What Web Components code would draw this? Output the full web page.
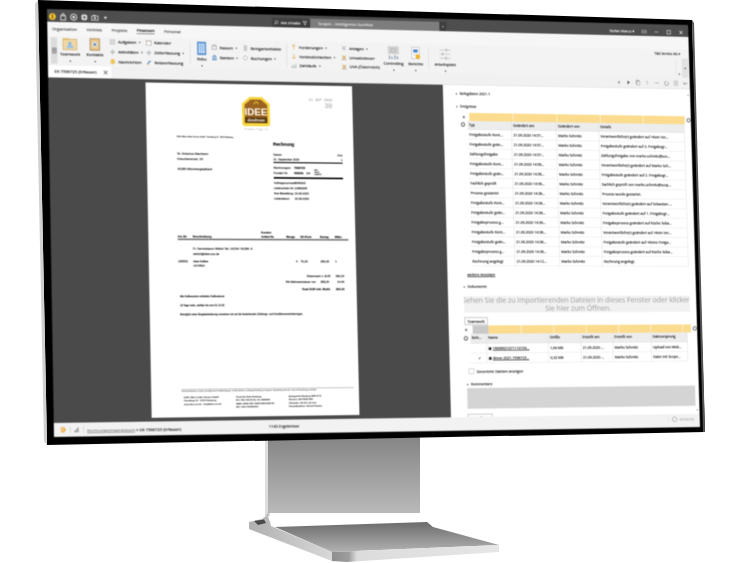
<!DOCTYPE html>
<html lang="de"><head><meta charset="utf-8"><title>Monitor</title>
<style>html,body{margin:0;background:#fff;width:740px;height:563px;overflow:hidden;font-family:"Open Sans","Noto Sans",sans-serif}</style>
</head><body>
<monitor-view></monitor-view>
<script>
const ICONS={
teamwork:'<svg viewBox="0 0 28 24"><rect x="1" y="3" width="26" height="20" fill="#f0d7a4" stroke="#c69a50"/><rect x="1" y="1" width="11" height="4" fill="#dfc07a"/><circle cx="14" cy="11" r="3.2" fill="#8fb8e0"/><path d="M7 20c1-5 4-6 7-6s6 1 7 6z" fill="#9cc2e6"/></svg>',
kontakte:'<svg viewBox="0 0 20 24"><rect x="1" y="1" width="18" height="22" fill="#e6c48c" stroke="#8d6a2e"/><rect x="5" y="7" width="10" height="10" fill="#f5ecd8"/><path d="M7 9l6 6M13 9l-6 6" stroke="#3d6ea8" stroke-width="1.6"/></svg>',
rebu:'<svg viewBox="0 0 18 26"><rect x="1" y="1" width="16" height="24" fill="#5f9bdc" stroke="#3a75ba"/><rect x="3" y="4" width="12" height="18" fill="#d6e6f7"/><path d="M3 8h12M3 12h12M3 16h12M7 4v18M11 4v18" stroke="#6ba3e0" stroke-width="1"/></svg>',
ctrl:'<svg viewBox="0 0 24 26"><rect x="2" y="1" width="20" height="13" fill="#e4e4e4" stroke="#aaa"/><rect x="6" y="4" width="12" height="7" fill="#cfcfcf" stroke="#999"/><path d="M4 18v7M9 20v5M15 17v8M20 19v6" stroke="#8d9db2" stroke-width="2.4"/></svg>',
bericht:'<svg viewBox="0 0 20 26"><rect x="2" y="1" width="15" height="22" fill="#fff" stroke="#aaa"/><rect x="5" y="5" width="9" height="6" fill="#4c86c6"/><path d="M5 14h8M5 17h6" stroke="#bbb"/><circle cx="14" cy="19" r="4.5" fill="#f0b429"/></svg>',
arbeit:'<svg viewBox="0 0 26 26"><path d="M2 5h22M2 13h22M2 21h22" stroke="#c4c4c4" stroke-width="1.6"/><path d="M16 2v6M8 10v6M15 18v6" stroke="#a2a2a2" stroke-width="1.6"/></svg>',
box:'<svg viewBox="0 0 12 12"><rect x="1" y="1" width="10" height="10" fill="#d8d8d8" stroke="#c2c2c2"/></svg>',
cal:'<svg viewBox="0 0 12 12"><rect x="1" y="1.5" width="10" height="9.5" fill="#fff" stroke="#888"/><path d="M1 3.5h10" stroke="#e0a070"/></svg>',
plus:'<svg viewBox="0 0 12 12"><path d="M6 1v10M1 6h10" stroke="#6b9bd0" stroke-width="1.6"/><circle cx="6" cy="6" r="1.8" fill="#f0c060"/></svg>',
bell:'<svg viewBox="0 0 12 12"><path d="M6 1c2.6 0 3.5 2 3.5 4.5L11 9H1l1.5-3.5C2.5 3 3.4 1 6 1z" fill="#f3c74f" stroke="#d99f1f" stroke-width=".6"/><circle cx="6" cy="10.4" r="1.2" fill="#d99f1f"/></svg>',
pen:'<svg viewBox="0 0 12 12"><path d="M2 10l1-3 5-5 2 2-5 5z" fill="#5f8fc4"/><path d="M1 11h6" stroke="#d9a441"/></svg>',
coin:'<svg viewBox="0 0 12 12"><rect x="1" y="3" width="10" height="7" fill="#ececec" stroke="#999"/><path d="M3 3V1h6v2" stroke="#999" fill="none"/></svg>',
bank:'<svg viewBox="0 0 12 12"><path d="M1 4l5-3 5 3zM2 5h1.6v5H2zM5.2 5h1.6v5H5.2zM8.400 5H10v5H8.400zM1 10.300h10V12H1z" fill="#4d83c0"/></svg>',
sheet:'<svg viewBox="0 0 12 12"><rect x="3" y="0" width="7" height="12" fill="#c8c8c8"/></svg>',
diamond:'<svg viewBox="0 0 12 12"><path d="M6 1l5 5-5 5-5-5z" fill="#fff" stroke="#999"/></svg>',
up:'<svg viewBox="0 0 12 12"><path d="M6 1v10M3 4l3-3 3 3" stroke="#e2a84b" stroke-width="1.4" fill="none"/></svg>',
down:'<svg viewBox="0 0 12 12"><path d="M6 1v7" stroke="#e2a84b" stroke-width="1.4"/><path d="M2 8h8l-1 3H3z" fill="#e9c47d"/></svg>',
pay:'<svg viewBox="0 0 12 12"><path d="M1 11V7M4 11V4M7 11V6M10 11V2" stroke="#9db7a5" stroke-width="1.6"/></svg>',
xx:'<svg viewBox="0 0 12 12"><path d="M2 2l8 8M10 2l-8 8" stroke="#9a9a9a" stroke-width="1.4"/></svg>',
tax:'<svg viewBox="0 0 12 12"><path d="M2 2l8 8M10 2l-8 8" stroke="#c9973c" stroke-width="1.6"/><path d="M1 11h10" stroke="#8d8d8d"/></svg>'
};
function def(name,html,extra){customElements.define(name,class extends HTMLElement{
  constructor(){super();this.attachShadow({mode:'open'});}
  connectedCallback(){this.shadowRoot.innerHTML=typeof html==='function'?html(this):html; if(extra)extra(this);}
});}

def('rib-item',h=>`<style>:host{display:flex;align-items:center;gap:5px;height:19px;font-size:7.800px;color:#000;white-space:nowrap}
svg{width:11px;height:11px;flex:none}b{font-weight:400;font-size:5px;color:#222}</style>${ICONS[h.getAttribute('i')]||''}<span><slot></slot></span>${h.hasAttribute('a')?'<b>▾</b>':''}`);
def('rib-big',h=>`<style>:host{display:flex;flex-direction:column;align-items:center;width:${h.getAttribute('w')}px;margin-left:${h.getAttribute('m')||0}px;height:56px;font-size:7.800px;color:#000;white-space:nowrap}
svg{width:${h.getAttribute('iw')||28}px;height:${h.getAttribute('ih')||24}px;margin-top:${h.getAttribute('t')||3}px;flex:none}span{margin-top:2px;line-height:10px}b{font-weight:400;font-size:5px;line-height:7px;margin-top:5px}</style>${ICONS[h.getAttribute('i')]}<span><slot></slot></span><b>▾</b>`);
def('rib-col',h=>`<style>:host{display:flex;flex-direction:column;width:${h.getAttribute('w')}px;margin-left:${h.getAttribute('m')||0}px;padding-top:${h.getAttribute('t')||0}px;box-sizing:border-box}</style><slot></slot>`);
def('rib-sep',h=>`<style>:host{display:block;width:1px;height:44px;background:#d6d6d6;align-self:center;margin-left:${h.getAttribute('m')||0}px}</style>`);

def('title-bar',`<style>:host{display:flex;align-items:center;height:24px;background:#4e4e4e;color:#fff;font-size:7.500px;box-sizing:border-box;white-space:nowrap}
.ic{display:flex;align-items:center;gap:6px;margin:4px 0 0 3px;width:428px;flex:none}
.ic svg{width:14px;height:14px;flex:none}
.search{display:flex;align-items:stretch;width:347px;height:18px;margin-top:5px;background:#7d7d7d;color:#eee;font-size:7.500px;flex:none}
.sl{display:flex;align-items:center;gap:4px;background:#3f3f3f;color:#fff;padding:0 6px 0 4px;width:75px;box-sizing:border-box;flex:none}
.sl svg{width:10px;height:10px}.st{flex:1;padding-left:16px;align-self:center}
.se{width:14px;background:#3e3e3e;display:flex;align-items:center;justify-content:center;font-size:5px}
.usr{margin:6px 0 0 auto;display:flex;align-items:center;gap:15px;padding-right:10px}.usr svg{width:11px;height:11px}</style>
<div class="ic">
<svg viewBox="0 0 14 14"><circle cx="7" cy="7" r="6.500" fill="#f2c230"/><rect x="6" y="3" width="2" height="8" fill="#5a4a10"/></svg>
<svg viewBox="0 0 14 14"><path d="M2.500 5h9v8h-9zM5 5V3a2 2 0 014 0v2" fill="none" stroke="#eee" stroke-width="1.500"/></svg>
<svg viewBox="0 0 14 14"><circle cx="7" cy="7" r="5.800" fill="none" stroke="#eee" stroke-width="1.500"/><circle cx="7" cy="7" r="2.500" fill="#eee"/></svg>
<svg viewBox="0 0 14 14"><circle cx="7" cy="7" r="6" fill="#eee"/><circle cx="7" cy="7" r="2.200" fill="#4e4e4e"/><path d="M7 1v3M7 10v3M1 7h3M10 7h3" stroke="#4e4e4e"/></svg>
<svg viewBox="0 0 14 14"><rect x="1" y="4" width="12" height="8" fill="none" stroke="#eee" stroke-width="1.300"/><circle cx="7" cy="8" r="2" fill="#eee"/><rect x="4" y="2" width="4" height="2" fill="#eee"/></svg>
<svg viewBox="0 0 14 14"><path d="M4 5h6l-3 5z" fill="#eee"/></svg>
</div>
<div class="search"><div class="sl"><svg viewBox="0 0 10 10"><circle cx="5.500" cy="4" r="3" fill="none" stroke="#ddd"/><path d="M3.500 6.500L1 9" stroke="#ddd" stroke-width="1.300"/></svg><span>Alle Inhalte</span><svg viewBox="0 0 10 10"><path d="M1 1h8L6 5v4L4 8V5z" fill="none" stroke="#eee"/></svg></div><div class="st">Scopen – Intelligentes Suchfeld</div><div class="se">▾</div></div>
<div class="usr"><span>Stefan Marus ▾</span>
<svg viewBox="0 0 12 12"><rect x="1" y="3" width="10" height="6" fill="none" stroke="#bbb"/><path d="M1 6h10" stroke="#bbb"/></svg>
<svg viewBox="0 0 12 12"><path d="M2 6h8" stroke="#ddd" stroke-width="1.200"/></svg>
<svg viewBox="0 0 12 12"><rect x="2" y="2" width="8" height="8" fill="none" stroke="#ddd" stroke-width="1.400"/></svg>
<svg viewBox="0 0 12 12"><path d="M2.500 2.500l7 7M9.500 2.500l-7 7" stroke="#eee" stroke-width="1.300"/></svg></div>`);

def('tab-row',`<style>:host{display:flex;align-items:center;height:26px;background:#f6f6f6;font-size:7.800px;color:#333;white-space:nowrap;padding-left:9px;gap:18px;box-sizing:border-box}
.on{color:#000;font-weight:600;border-bottom:1.500px solid #444;padding-bottom:1px}</style>
<span>Organisation</span><span>Vertrieb</span><span>Projekte</span><span class="on">Finanzen</span><span>Personal</span>`);

def('ribbon-bar',`<style>:host{display:flex;height:56px;background:#f3f3f3;box-sizing:border-box;position:relative}
.strip{width:12px;height:50px;margin:3px 0 0 6px;background:#dcdcdc;display:flex;align-items:center;justify-content:center;flex:none}
.strip svg{width:9px;height:12px}
.end{margin-left:auto;width:130px;height:56px;display:flex;justify-content:flex-end;position:relative;flex:none}
.tns{font-size:7px;color:#000;margin:4px 18px 0 0;white-space:nowrap}
.sc{position:absolute;right:2px;top:18px;width:14px;height:38px;background:#e2e2e2;font-size:7px;color:#666;text-align:center;line-height:38px}
.dn{position:absolute;right:20px;bottom:3px;font-size:6px;color:#444}.vl{position:absolute;right:28px;top:20px;height:32px;width:1px;background:#dcdcdc}</style>
<div class="strip"><svg viewBox="0 0 9 12"><rect x="1" y="1" width="7" height="10" fill="#bbb" stroke="#777"/><path d="M1 4h7M1 7h7" stroke="#777"/></svg></div>
<rib-big i="teamwork" w="42" m="3">Teamwork</rib-big>
<rib-big i="kontakte" w="32" m="10" iw="20" ih="24">Kontakte</rib-big>
<rib-col w="69" m="12"><rib-item i="box" a>Aufgaben</rib-item><rib-item i="plus" a>Aktivitäten</rib-item><rib-item i="bell">Nachrichten</rib-item></rib-col>
<rib-col w="84"><rib-item i="cal">Kalender</rib-item><rib-item i="plus" a>Zeiterfassung</rib-item><rib-item i="pen">Reiseerfassung</rib-item></rib-col>
<rib-sep></rib-sep>
<rib-big i="rebu" w="24" m="10" iw="18" ih="26" t="5">Rebu</rib-big>
<rib-col w="60" m="7" t="6"><rib-item i="coin" a>Kassen</rib-item><rib-item i="bank" a>Banken</rib-item></rib-col>
<rib-col w="85" t="6"><rib-item i="sheet">Belegarbeitsliste</rib-item><rib-item i="diamond" a>Buchungen</rib-item></rib-col>
<rib-sep m="1"></rib-sep>
<rib-col w="99" m="8" t="3"><rib-item i="up" a>Forderungen</rib-item><rib-item i="down" a>Verbindlichkeiten</rib-item><rib-item i="pay" a>Zahlläufe</rib-item></rib-col>
<rib-col w="82" t="3"><rib-item i="xx" a>Anlagen</rib-item><rib-item i="tax">Umsatzsteuer</rib-item><rib-item i="tax">UVA (Österreich)</rib-item></rib-col>
<rib-big i="ctrl" w="44" iw="24" ih="26" t="6">Controlling</rib-big>
<rib-big i="bericht" w="31" m="7" iw="20" ih="26" t="6">Berichte</rib-big>
<rib-sep m="10"></rib-sep>
<rib-big i="arbeit" w="48" m="9" iw="26" ih="26" t="6">Arbeitsplatz</rib-big>
<div class="end"><span class="tns">T&amp;S Service AG ▾</span><div class="vl"></div><div class="sc">◂</div><div class="dn">▾</div></div>`);

def('doc-tabs',`<style>:host{display:flex;height:23px;background:#f1f1f1;box-sizing:border-box;align-items:stretch;border-bottom:1px solid #ddd}
.tab{display:flex;align-items:center;gap:7px;background:#fff;padding:0 6px 0 12px;font-size:7.900px;color:#000;white-space:nowrap;width:119px;box-sizing:border-box;justify-content:space-between}
.tab svg{width:9px;height:9px}.tools{margin-left:auto;display:flex;align-items:center;gap:9px;padding-right:4px}.tools svg{width:11px;height:11px}</style>
<div class="tab"><span>ER 7596725 (Erfasser)</span><svg viewBox="0 0 9 9"><path d="M1 1l7 7M8 1L1 8" stroke="#555" stroke-width="1.200"/></svg></div>
<div class="tools">
<svg viewBox="0 0 12 12"><path d="M8 2v8L3 6z" fill="#999"/></svg>
<svg viewBox="0 0 12 12"><path d="M4 2v8l5-4z" fill="#444"/></svg>
<svg viewBox="0 0 12 12"><rect x="2" y="1" width="6" height="8" fill="#fff" stroke="#777"/><rect x="4" y="3" width="6" height="8" fill="#fff" stroke="#777"/></svg>
<svg viewBox="0 0 12 12"><text x="3" y="10" font-size="10" font-family="Open Sans" fill="#777">?</text></svg>
<svg viewBox="0 0 12 12"><path d="M1 6h10" stroke="#888"/></svg>
<svg viewBox="0 0 12 12"><path d="M9 3a4.500 4.500 0 11-3-1" fill="none" stroke="#777" stroke-width="1.100"/></svg>
<svg viewBox="0 0 12 12"><rect x="2" y="1" width="8" height="10" fill="#e8e8e8" stroke="#aaa"/><path d="M4 4h4M4 7h4" stroke="#aaa"/></svg>
<svg viewBox="0 0 12 12"><path d="M11 6H2M5 3L2 6l3 3" fill="none" stroke="#777" stroke-width="1.100"/></svg>
</div>`);

def('invoice-page',`<style>:host{display:flex;flex-direction:column;width:402px;height:632px;background:#fff;color:#000;font:5.600px/8px "Liberation Sans",sans-serif;margin:6px 0 0 184px;box-sizing:border-box;overflow:hidden;flex:none}
.top{display:flex;height:97px;box-sizing:border-box;padding:23px 0 0 184px}
.logo{width:56px;height:66px;flex:none}
.stamp{margin:0 0 0 72px;color:#aaa;font:7px/10px "Liberation Mono",monospace;text-align:right;width:50px}
.stamp b{font-weight:400;font-size:13px;line-height:14px}
.send{height:10px;padding-left:58px;font-size:3.600px;line-height:10px;color:#222}
.mid{display:flex;height:115px}
.addr{width:244px;padding:23px 0 0 58px;box-sizing:border-box;font-size:6px;line-height:9.500px}
.info{width:136px}
.rg{font:700 8.500px/12px "Liberation Sans",sans-serif;color:#000;margin-top:1px}
.r{display:flex;justify-content:space-between;height:9px;line-height:9px}
.kv{display:flex;height:10px;line-height:10px}.kv i{font-style:normal;width:40px}
.rule{height:2.400px;background:#000}
.b{font-weight:700;color:#000}
.th,.tr{display:grid;grid-template-columns:29px 132px 49px 27px 39px 29px 22px;margin-left:56px;width:327px}
.th{font-weight:700;color:#000;height:20px;line-height:8px;align-items:end;font-size:5.400px}
.hr{height:2.600px;background:#777;margin:0 0 0 56px;width:332px;flex:none}
.tr{line-height:8px}
.tt{display:flex;justify-content:flex-end;margin-right:24px;height:11px;line-height:11px;gap:9px}
.tt span:last-child{width:18px;text-align:right}
.note{margin-left:58px;font-size:4.800px;height:17px;line-height:8px}
.foot{margin:auto 0 0 58px;width:334px;border-top:1.500px solid #999;padding-bottom:14px;font-size:4.400px;line-height:6.600px;color:#222}
.tiny{font-size:2.700px;line-height:7px;color:#777;white-space:nowrap;overflow:hidden}
.cols{display:grid;grid-template-columns:100px 102px 1fr;margin-top:5px;padding-left:4px}
</style>
<div class="top"><svg class="logo" viewBox="0 0 56 66"><path d="M16 1h24l15 13v38a5 5 0 01-5 5H6a5 5 0 01-5-5V14z" fill="#f7d63e"/><path d="M18 6h20l12 10v30H6V16z" fill="#9a6420"/><rect x="6" y="40" width="44" height="11" fill="#5c3a10"/><text x="28" y="36" text-anchor="middle" font-family="Liberation Sans" font-weight="700" font-size="19" fill="#fff">IDEE</text><text x="28" y="48" text-anchor="middle" font-family="Liberation Serif" font-style="italic" font-weight="700" font-size="8" fill="#fff">dondream</text><path d="M24 15c3-6 8-6 8 0" fill="none" stroke="#f7d63e" stroke-width="1.500"/><text x="28" y="64" text-anchor="middle" font-family="Liberation Serif" font-style="italic" font-size="4.600" fill="#999">Kompetent · Flugge · Fly</text></svg><div class="stamp">21 SEP 2020<br><b>30</b></div></div>
<div class="send">IDEE Office Coffee Service GmbH · Pinselberg 10 · 20113 Hamburg</div>
<div class="mid"><div class="addr">St. Antonius Altenheim<br>Kreuzherrenstr. 24<br><br>41189 Mönchengladbach</div>
<div class="info"><div class="rg">Rechnung</div>
<div class="r" style="margin-top:10px"><span>Datum</span><span>Kun</span></div><div class="r"><span>21. September 2020</span><span>1</span></div><div class="rule"></div>
<div class="kv" style="margin-top:4px"><i>Rechnungsnr.</i><span class="b">7596725</span></div>
<div class="kv" style="margin-top:1px;height:9px;line-height:9px"><i>Kunden Nr.</i><span class="b" style="width:24px">569291</span><span>DA</span><span style="margin-left:8px;font-size:3.600px;line-height:4px;margin-top:-4px">bitte<br>immer<br>angeben</span></div><div class="rule" style="margin-top:3px"></div>
<div class="kv" style="margin-top:3px"><i>Auftragsnummer</i><span>3645003</span></div><div class="kv"><i>Lieferschein-Nr.</i><span>12680335</span></div><div class="kv"><i>Ihre Bestellung</i><span>16.09.2020</span></div><div class="kv"><i>Lieferdatum</i><span>16.09.2020</span></div></div></div>
<div class="th" style="margin-top:53px"><span>Art.-Nr.</span><span>Beschreibung</span><span>Kunden<br>Artikel Nr.</span><span>Menge</span><span>VK-Preis</span><span>Betrag</span><span>Währ.</span></div><div class="hr"></div>
<div class="tr" style="margin-top:12px;height:10px"><span></span><span style="grid-column:2/5">Fr. Servicebaum Wittich Tel.: 02154 / 81296 -0</span></div>
<div class="tr" style="height:14px"><span></span><span style="grid-column:2/5">wittich@idee.coo.de</span></div>
<div class="tr" style="height:8px"><span>195552</span><span>Idee Kaffee</span><span></span><span style="text-align:right;padding-right:6px">4</span><span>70,00</span><span>280,00</span><span>1</span></div>
<div class="tr" style="height:12px"><span></span><span>mit Milch</span></div>
<div class="tt" style="margin-top:7px"><span>Warenwert n. EUR</span><span>280,00</span></div>
<div class="tt"><span>5% Mehrwertsteuer von</span><span style="width:20px">288,00</span><span>14,40</span></div>
<div class="tt b" style="height:15px;line-height:16px"><span>Total EUR inkl. MwSt.</span><span>302,40</span></div>
<div class="note" style="margin-top:3px">Alle Kaffeesorten enthalten Kaffeesteuer</div>
<div class="note">10 Tage netto, zahlbar bis zum 01.10.20</div>
<div class="note">Bezüglich einer Eingabeänderung verweisen wir auf die bestehenden Zahlungs- und Konditionsvereinbarungen.</div>
<div class="foot"><div class="tiny">Gerichtsstand Hamburg · Es gelten unsere Allgemeinen Geschäftsbedingungen · Die Ware bleibt bis zur vollständigen Bezahlung unser Eigentum · Bankverbindung siehe unten · Irrtum und Preisänderungen vorbehalten</div>
<div class="cols"><div>IDEE Office Coffee Service GmbH<br>Pinselberg 10 · 20113 Hamburg<br>www.idee.coo.de · info@idee.coo.de</div><div>Deutsche Bank Hamburg<br>BLZ 200 700 00 Kto. Nr. 3845000<br>IBAN: DE86 2007 0000 0384 5000 00<br>BIC: DEUTDEHHXXX</div><div>Amtsgericht Hamburg HRB 6775<br>Steuernr. 46/726/03 993<br>USt-Id-Nr.: DE 811 141 474<br>Geschäftsführer: Christof Haasler</div></div></div>`);

const GRID=(cols,head,rows,h0)=>`<div class="g" style="grid-template-columns:${cols};grid-template-rows:${h0}px;">${head.map(t=>`<div class="h">${t}</div>`).join('')}${rows.flat().map(t=>`<div class="c">${t}</div>`).join('')}</div>`;
const GSTYLE=`.g{display:grid;grid-auto-rows:19px;gap:0;font-size:7.100px;line-height:18px;color:#000;background:#e6e6e6}
.h,.c{padding-left:3px;white-space:nowrap;overflow:hidden;background:#fff;border-right:1px solid #dedede;border-bottom:1px solid #e8e8e8;box-sizing:border-box}.h{background:#ededed;color:#000;border-color:#dcdcdc;line-height:15px}`;
const K='Freigabestufe Kont...',G='Freigabestufe geän...',P='Freigabeprozess g...',M='Marko Schmitz',D57='21.09.2020 14:57...',D56='21.09.2020 14:56...',D36='21.09.2020 14:36...';
const EV=[[K,D57,M,'Verantwortliche(r) geändert auf &lt;Kein Ver...'],[G,D57,M,'Freigabestufe geändert auf 3. Freigabegr...'],['Zahlungsfreigabe',D57,M,'Zahlungsfreigabe von marko.schmitz@sco...'],[K,D56,M,'Verantwortliche(r) geändert auf Marko Sch...'],[G,D56,M,'Freigabestufe geändert auf 2. Freigabegr...'],['Fachlich geprüft',D56,M,'Sachlich geprüft von marko.schmitz@scop...'],['Prozess gestartet',D36,M,'Prozess wurde gestartet.'],[K,D36,M,'Verantwortliche(r) geändert auf Sebastian ...'],[G,D36,M,'Freigabestufe geändert auf 1. Freigabegr...'],[P,D36,M,'Freigabeprozess geändert auf Küche Seba...'],[K,D36,M,'Verantwortliche(r) geändert auf &lt;Kein Ver...'],[G,D36,M,'Freigabestufe geändert auf &lt;Keine Freiga...'],[P,D36,M,'Freigabeprozess geändert auf Küche Seba...'],['Rechnung angelegt','21.09.2020 14:12...',M,'Rechnung angelegt.']];

def('filter-bar',h=>`<style>:host{display:flex;align-items:center;height:16px;margin:${h.getAttribute('mt')||0}px 0 0 ${h.getAttribute('ml')||0}px;flex:none}
.x{width:${h.getAttribute('xw')||14}px;font-size:7px;color:#000;flex:none}.gr{width:${h.getAttribute('gw')||0}px;height:100%;background:#c9c9c9;flex:none}
.y{flex:1;height:100%;background:repeating-linear-gradient(90deg,#fbdc8f 0 ${h.getAttribute('p')||88}px,#fff 0 ${(+h.getAttribute('p')||88)+1}px)}
svg{width:10px;height:10px;margin-left:3px;flex:none}</style><span class="x">✕</span><div class="gr"></div><div class="y"></div>
<svg viewBox="0 0 10 10"><circle cx="5" cy="5" r="3.400" fill="none" stroke="#777" stroke-width="2"/></svg>`);

def('sec-head',h=>`<style>:host{display:block;height:16px;line-height:16px;font-size:7.100px;color:#000;margin:${h.getAttribute('mt')||0}px 0 0 ${h.getAttribute('ml')||26}px;white-space:nowrap;flex:none}b{font-weight:400;font-size:5px;margin-right:5px}</style><b>▾</b><slot></slot>`);
def('plain-btn',h=>`<style>:host{display:inline-block;height:15px;line-height:14px;font-size:7.100px;color:#000;background:#fbfbfb;border:1px solid #aaa;box-sizing:border-box;padding:0 5px;white-space:nowrap}</style><slot></slot>`);

def('ev-table',`<style>:host{display:flex;margin-left:34px;flex:none}${GSTYLE}svg{width:10px;height:10px;margin:2px 4px 0 0;flex:none}</style>
<svg viewBox="0 0 10 10"><circle cx="5" cy="5" r="3.400" fill="none" stroke="#666" stroke-width="2"/></svg>${GRID('90px 92px 88px 180px',['Typ','Geändert am','Geändert von','Details'],EV,17)}`);
def('doc-table',`<style>:host{display:flex;margin-left:29px;flex:none}${GSTYLE}svg{width:10px;height:10px;margin:4px 4px 0 0;flex:none}u{text-decoration:underline}</style>
<svg viewBox="0 0 10 10"><circle cx="5" cy="5" r="3.400" fill="none" stroke="#666" stroke-width="2"/></svg>${GRID('33px 126px 67px 66px 80px 76px',['Bele...','Name','Größe','Erstellt am','Erstellt von','Dateiursprung'],[['','▣ <u>16006921071110154...</u>','1,64 MB','21.09.2020 ...',M,'Upload von Mob...'],['<span style="padding-left:12px">✓</span>','▣ <u>dreve-2021-7596725...</u>','0,32 MB','21.09.2020 ...',M,'Datei mit Scope...']],19)}`);

def('side-panel',`<style>:host{display:flex;flex-direction:column;flex:1;background:#fff;color:#000;overflow:hidden;position:relative;min-width:0}
.more{margin:11px 0 0 40px;font-size:7.100px;line-height:10px;height:10px;text-decoration:underline;color:#000;flex:none}
.drop{margin:11px 0 0 32px;width:466px;height:32px;background:#f1f1f1;color:#a8a8a8;font-size:14.300px;line-height:16px;display:flex;flex-direction:column;align-items:center;white-space:nowrap;overflow:hidden;flex:none}
.btn{margin:3px 0 0 32px;flex:none;height:15px}
.chk{display:flex;align-items:center;gap:5px;margin:9px 0 0 38px;font-size:7.100px;height:13px;flex:none}
.chk i{width:9px;height:9px;border:1px solid #bbb;background:#fff;display:block}
.txt{margin:0 0 0 34px;width:470px;height:40px;background:#d4d4d4;flex:none}
.bar{position:absolute;right:0;top:0;bottom:0;width:9px;display:flex;flex-direction:column;justify-content:space-between;align-items:center;padding:8px 0 4px;box-sizing:border-box;font-size:6px;color:#333}</style>
<sec-head mt="8">Belegdaten 2021-1</sec-head>
<sec-head mt="9">Ereignisse</sec-head>
<filter-bar mt="5" ml="38" xw="14" p="89"></filter-bar>
<ev-table></ev-table>
<div class="more">weitere Anzeigen</div>
<sec-head mt="10" ml="32">Dokumente</sec-head>
<div class="drop"><span>Sehen Sie die zu importierenden Dateien in dieses Fenster oder klicken</span><span>Sie hier zum Öffnen.</span></div>
<div class="btn" style="margin-top:3px"><plain-btn>Teamwork</plain-btn></div>
<filter-bar mt="7" ml="32" xw="16" gw="32" p="66"></filter-bar>
<doc-table style="margin-top:0"></doc-table>
<div class="chk"><i></i>Generierte Dateien anzeigen</div>
<sec-head mt="10" ml="34">Kommentare</sec-head>
<div class="txt"></div>
<div class="btn" style="margin:4px 0 0 34px"><plain-btn>Hinzufügen</plain-btn></div>
<div class="bar"><span>▪</span><span>▪</span></div>`);

def('status-bar',`<style>:host{display:flex;align-items:center;height:26px;background:#f2f2f2;font-size:7.800px;color:#000;white-space:nowrap;padding:0 12px 0 12px;box-sizing:border-box;flex:none}
svg{width:12px;height:12px;flex:none}.s{width:1px;height:12px;background:#ccc;margin:0 6px;flex:none}.c u{color:#777}.c{width:346px;flex:none;margin-top:4px}.m{flex:1;margin-top:-3px}
.t{color:#b0b0b0;display:flex;gap:4px;align-items:center;margin-top:-6px}</style>
<svg viewBox="0 0 12 12"><path d="M1 1h6l4 5-4 5H1z" fill="#f0b45a"/><path d="M3 4h3M3 7h3" stroke="#fff"/></svg><i class="s"></i>
<svg viewBox="0 0 12 12"><path d="M2 11V8M5 11V5M8 11V2" stroke="#888" stroke-width="2"/></svg><i class="s"></i>
<div class="c"><u>Rechnungseingangsbuch</u> &gt; ER 7596725 (Erfasser)</div><div class="m">1143 Ergebnisse</div>
<i class="s" style="background:#ddd;margin-top:-6px"></i><div class="t"><svg viewBox="0 0 12 12"><circle cx="6" cy="6" r="4.500" fill="none" stroke="#aaa" stroke-width="1.500"/></svg><span>00:00:00</span></div>`);

def('mon-screen',`<style>:host{position:absolute;left:0;top:0;width:1280px;height:800px;transform-origin:0 0;display:flex;flex-direction:column;background:#f3f3f3;overflow:hidden;font-family:"Open Sans","Noto Sans",sans-serif;-webkit-text-stroke:.18px currentColor;filter:blur(1px)}
.main{flex:1;display:flex;min-height:0}.dark{width:768px;background:#4a4a4a;flex:none;display:flex;overflow:hidden}</style>
<title-bar></title-bar><tab-row></tab-row><ribbon-bar></ribbon-bar><doc-tabs></doc-tabs>
<div class="main"><div class="dark"><invoice-page></invoice-page></div><side-panel></side-panel></div><status-bar></status-bar>`,
h=>{const W=1280,H=800,[x0,y0,x1,y1,x2,y2,x3,y3]=[47,9,688,25,700,427,54,437];
 const dx1=x1-x2,dx2=x3-x2,sx=x0-x1+x2-x3,dy1=y1-y2,dy2=y3-y2,sy=y0-y1+y2-y3,den=dx1*dy2-dx2*dy1;
 const g=(sx*dy2-dx2*sy)/den,k=(dx1*sy-sx*dy1)/den;
 const a=x1-x0+g*x1,b=x3-x0+k*x3,d=y1-y0+g*y1,e=y3-y0+k*y3;
 h.style.transform=`matrix3d(${a/W},${d/W},0,${g/W},${b/H},${e/H},0,${k/H},0,0,1,0,${x0},${y0},0,1)`;});

def('mon-stand',`<style>:host{position:absolute;inset:0;display:block}svg{display:block;width:740px;height:563px}</style>
<svg viewBox="0 0 740 563"><defs>
<linearGradient id="n" x1="0" y1="0" x2="0" y2="1"><stop offset="0" stop-color="#838383"/><stop offset="1" stop-color="#b9b9b9"/></linearGradient>
<linearGradient id="t" x1="0" y1="0" x2="0" y2="1"><stop offset="0" stop-color="#6b6b6b"/><stop offset="1" stop-color="#b2b2b2"/></linearGradient>
<linearGradient id="f" x1="0" y1="0" x2="1" y2="0"><stop offset="0" stop-color="#8e8e8e"/><stop offset=".1" stop-color="#9d9d9d"/><stop offset=".15" stop-color="#dcdcdc"/><stop offset="1" stop-color="#e6e6e6"/></linearGradient>
<linearGradient id="l" x1="0" y1="0" x2="1" y2="0"><stop offset="0" stop-color="#b0b0b0"/><stop offset="1" stop-color="#d8d8d8"/></linearGradient></defs>
<path d="M265 436h5v80h-5z" fill="#dedede"/>
<path d="M268 436L420 434V513H268z" fill="url(#n)"/>
<path d="M249 522L262 519 266 516 268 512 271 526 332 552V561L249 529z" fill="url(#l)"/>
<path d="M254 521L264 519.500 266 523 258 525z" fill="#4a4a4a"/>
<path d="M268 516L422 513 426 519 430 523C420 522 290 527 275 527 271 525 269 520 268 516z" fill="#fff"/>
<path d="M275 527L427 522 433 527 499 545 332 552z" fill="url(#t)"/>
<path d="M332 552L499 545V552L347 562 332 561z" fill="url(#f)"/>
<path d="M38 0L692 20 705 432 47 445z" fill="#000"/>
<path d="M35 4L38 0 47 445 44 441z" fill="#d0d0d0"/>
<path d="M692 20l2 3 11 409h-2z" fill="#555"/>
</svg>`);

def('monitor-view',`<style>:host{display:block;position:relative;width:740px;height:563px;overflow:hidden}</style><mon-stand></mon-stand><mon-screen></mon-screen>`);
</script>
</body></html>
